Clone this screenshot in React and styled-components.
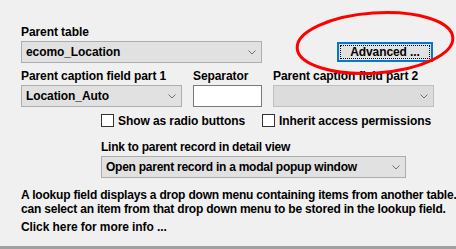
import React from "react";
import styled, { createGlobalStyle } from "styled-components";

let Global = createGlobalStyle`
  html, body {
    margin: 0;
    padding: 0;
    background: #f0f0f0;
  }
  body {
    font-family: "Liberation Sans", Arial, sans-serif;
    font-size: 12px;
    font-weight: bold;
    letter-spacing: -0.08px;
    color: #000;
  }
`;

let Page = styled.div`
  position: relative;
  width: 456px;
  height: 249px;
  box-sizing: border-box;
  padding: 25px 0 0 21px;
  background: #f0f0f0;
  border-bottom: 3px solid #a0a0a0;
  overflow: hidden;
`;

let Grid = styled.div`
  display: grid;
  grid-template-columns: 161px 69px 161px;
  column-gap: 11px;
  row-gap: 6px;
`;

let Field = styled.div`
  display: flex;
  flex-direction: column;
  gap: 1px;
  grid-column: ${(p) => p.span || "auto"};
`;

let Label = styled.div`
  line-height: 15px;
  white-space: nowrap;
`;

let Select = styled.div`
  height: 22px;
  box-sizing: border-box;
  width: ${(p) => (p.width ? p.width + "px" : "auto")};
  display: flex;
  align-items: center;
  justify-content: space-between;
  padding: 0 5px 0 4px;
  background: ${(p) => (p.disabled ? "#dcdcdc" : "#e1e1e1")};
  border: 1px solid ${(p) => (p.disabled ? "#bfbfbf" : "#adadad")};
  white-space: nowrap;
`;

let Chevron = () => (
  <svg width="8" height="5" viewBox="0 0 8 5">
    <path d="M0.5 0.5 L4 4 L7.5 0.5" fill="none" stroke="#707070" strokeWidth="1" />
  </svg>
);

let Input = styled.div`
  height: 22px;
  box-sizing: border-box;
  background: #fff;
  border: 1px solid #7a7a7a;
`;

let Button = styled.div`
  justify-self: end;
  align-self: end;
  margin: 0 1px 1px 0;
  width: 96px;
  height: 20px;
  box-sizing: border-box;
  border: 2px solid #0078d7;
  background: #e1e1e1;
  padding: 1px;
  display: flex;

  span {
    flex: 1;
    display: flex;
    align-items: center;
    justify-content: center;
    border: 1px dotted #000;
  }
`;

let Indented = styled.div`
  margin-left: 80px;
  display: flex;
  flex-direction: column;
`;

let CheckRow = styled.div`
  display: flex;
  margin-top: 6px;
  height: 15px;
  align-items: center;
`;

let Check = styled.label`
  display: flex;
  align-items: center;
  gap: 4px;
  width: ${(p) => p.width}px;
  white-space: nowrap;
`;

let Box = styled.span`
  width: 13px;
  height: 13px;
  box-sizing: border-box;
  background: #fff;
  border: 1px solid #333;
`;

let LinkField = styled(Field)`
  margin-top: 12px;
  letter-spacing: -0.25px;
`;

let Description = styled.div`
  margin-top: 10px;
  line-height: 14px;
  white-space: nowrap;
  letter-spacing: -0.2px;
`;

let More = styled.div`
  margin-top: 4px;
  line-height: 14px;
  cursor: pointer;
`;

let Highlight = styled.svg`
  position: absolute;
  left: 0;
  top: 0;
  pointer-events: none;
`;

export default function App() {
  return (
    <Page>
      <Global />
      <Grid>
        <Field span="1 / 3">
          <Label>Parent table</Label>
          <Select>
            <span>ecomo_Location</span>
            <Chevron />
          </Select>
        </Field>
        <Button>
          <span>Advanced ...</span>
        </Button>
        <Field>
          <Label>Parent caption field part 1</Label>
          <Select>
            <span>Location_Auto</span>
            <Chevron />
          </Select>
        </Field>
        <Field>
          <Label>Separator</Label>
          <Input />
        </Field>
        <Field>
          <Label>Parent caption field part 2</Label>
          <Select disabled>
            <span />
            <Chevron />
          </Select>
        </Field>
      </Grid>
      <Indented>
        <CheckRow>
          <Check width={161}>
            <Box />
            Show as radio buttons
          </Check>
          <Check>
            <Box />
            Inherit access permissions
          </Check>
        </CheckRow>
        <LinkField>
          <Label>Link to parent record in detail view</Label>
          <Select width={305}>
            <span>Open parent record in a modal popup window</span>
            <Chevron />
          </Select>
        </LinkField>
      </Indented>
      <Description>
        A lookup field displays a drop down menu containing items from another table.
        <br />
        can select an item from that drop down menu to be stored in the lookup field.
      </Description>
      <More>Click here for more info ...</More>
      <Highlight width="456" height="249" viewBox="0 0 456 249">
        <ellipse
          cx="375"
          cy="43"
          rx="78"
          ry="30"
          transform="rotate(-4 375 43)"
          fill="none"
          stroke="#ff0000"
          strokeWidth="3"
        />
      </Highlight>
    </Page>
  );
}
